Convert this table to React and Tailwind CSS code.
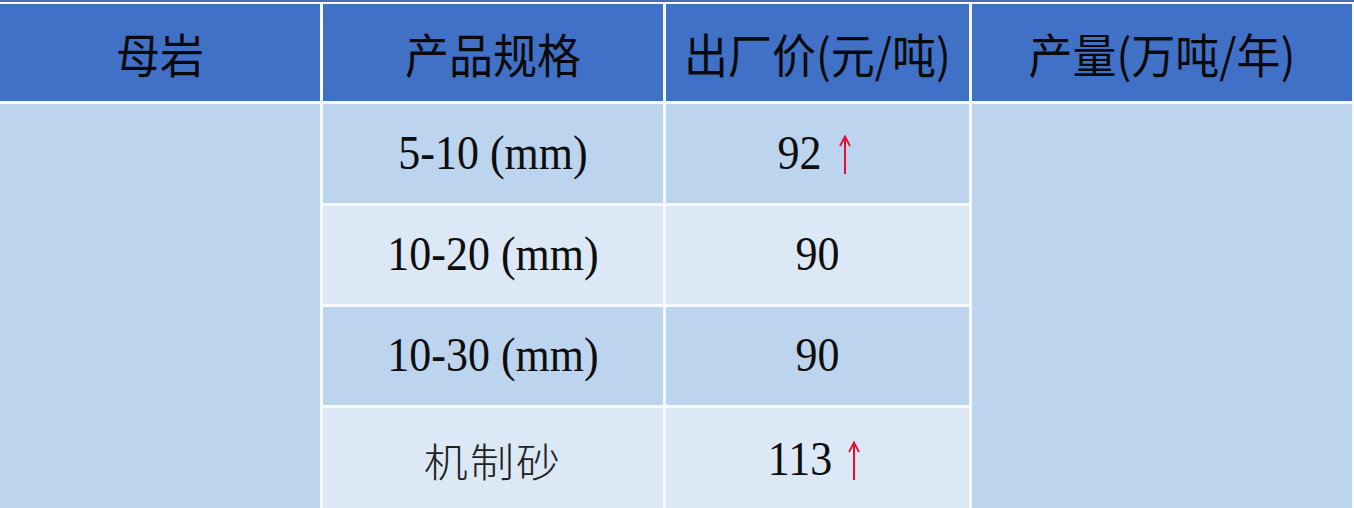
import React from "react";

const Arrow = ({ ml = "ml-[16px]" }) => (
  <svg width="14" height="40" viewBox="0 0 14 40" className={"inline-block align-[-12px] " + ml}>
    <line x1="7" y1="3" x2="7" y2="40" stroke="#e3102f" strokeWidth="2" />
    <polyline points="2,12 7,2.5 12,12" fill="none" stroke="#e3102f" strokeWidth="1.8" />
  </svg>
);

const Num = ({ children }) => (
  <span className="inline-block scale-y-[1.1] text-[44px] leading-none text-[#0d0d0d]" style={{ fontFamily: '"Liberation Serif", "Times New Roman", serif' }}>
    {children}
  </span>
);

export default function App() {
  const head = "flex items-center justify-center bg-[#4171c6] text-[44px] font-normal text-[#0a0a0a] leading-none";
  const dark = "flex items-center justify-center bg-[#bcd4ee]";
  const light = "flex items-center justify-center bg-[#dce8f6]";
  return (
    <div
      className="w-[1354px] h-[508px] overflow-hidden bg-[#f7fafd] border-t-2 border-[#4a6cb8] pt-[2px]"
      style={{ fontFamily: '"Noto Sans CJK SC", "Noto Sans", sans-serif' }}
    >
      <div className="grid grid-cols-[320px_340px_303px_380px] grid-rows-[97px_99px_98px_98px_100px] gap-[3px]">
        <div className={head}><span className="inline-block scale-y-[1.06]">母岩</span></div>
        <div className={head}><span className="inline-block scale-y-[1.06]">产品规格</span></div>
        <div className={head}><span className="inline-block scale-y-[1.06]">出厂价(元/吨)</span></div>
        <div className={head}><span className="inline-block scale-y-[1.06]">产量(万吨/年)</span></div>

        <div className="row-span-4 bg-[#bdd5ef]"></div>
        <div className={dark}><Num>5-10 (mm)</Num></div>
        <div className={dark + " pr-[6px]"}><Num>92</Num><Arrow /></div>
        <div className="row-span-4 bg-[#bdd5ef]"></div>

        <div className={light}><Num>10-20 (mm)</Num></div>
        <div className={light}><Num>90</Num></div>

        <div className={dark}><Num>10-30 (mm)</Num></div>
        <div className={dark}><Num>90</Num></div>

        <div className={light}>
          <span className="inline-block scale-x-[1.1] text-[40px] font-light leading-none text-[#222] tracking-[2px] pt-[4px]">机制砂</span>
        </div>
        <div className={light + " pr-[6px] pt-[4px]"}><Num>113</Num><Arrow ml="ml-[15px]" /></div>
      </div>
    </div>
  );
}
